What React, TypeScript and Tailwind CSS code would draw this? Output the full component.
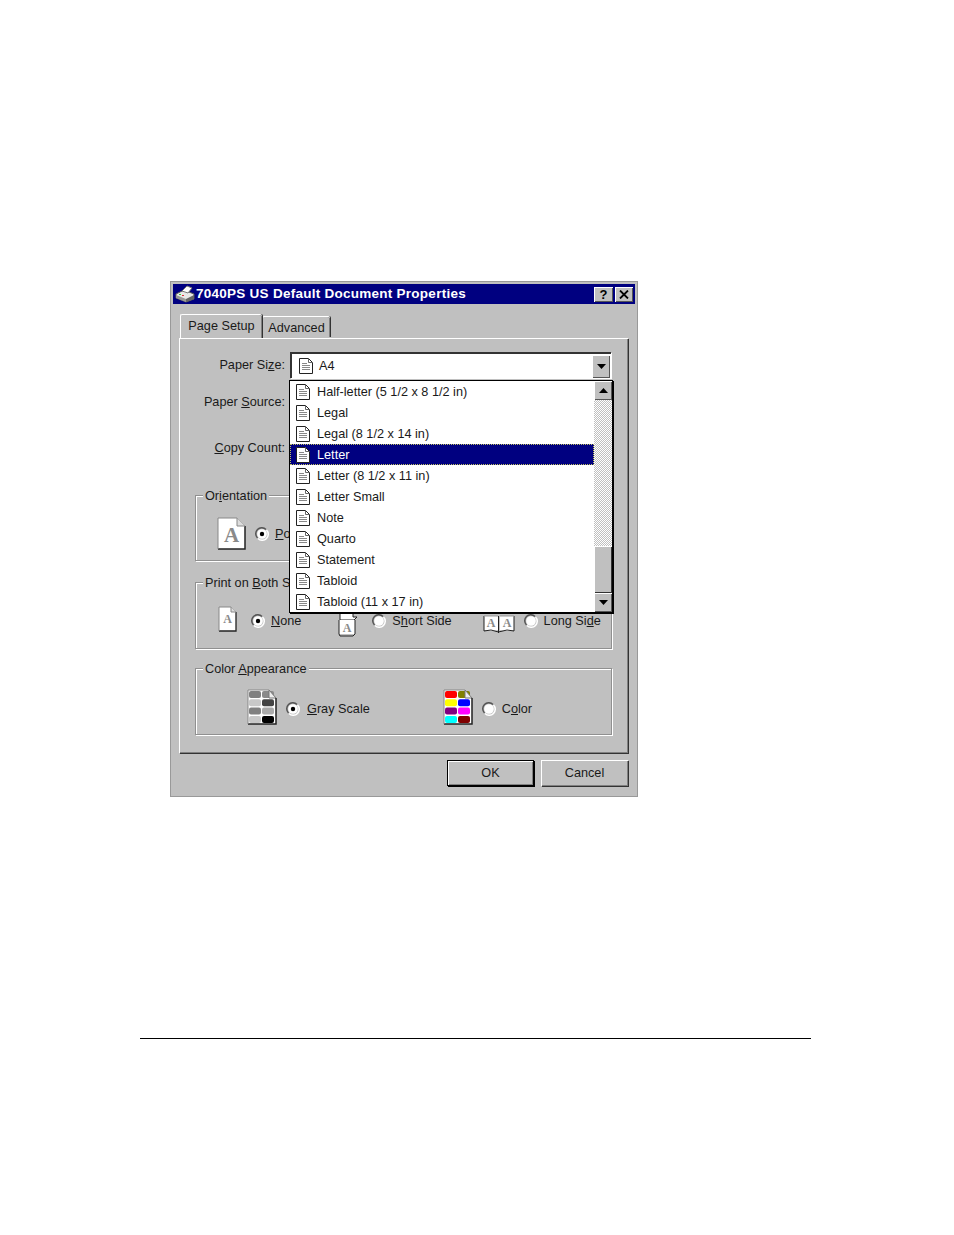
const FONT = "font-['Liberation_Sans',Arial,sans-serif]";

const PAPER_SIZES = [
  "Half-letter (5 1/2 x 8 1/2 in)",
  "Legal",
  "Legal (8 1/2 x 14 in)",
  "Letter",
  "Letter (8 1/2 x 11 in)",
  "Letter Small",
  "Note",
  "Quarto",
  "Statement",
  "Tabloid",
  "Tabloid (11 x 17 in)",
];

function DocIcon() {
  return (
    <svg width="16" height="18" viewBox="0 0 16 18" className="shrink-0">
      <path d="M1.5 1.5H10.5L14.5 5.5V16.5H1.5Z" fill="#fff" stroke="#222" />
      <path d="M10.5 1.5V5.5H14.5" fill="none" stroke="#666" />
      <path d="M4 6.5H9M4 8.5H12M4 10.5H12M4 12.5H12" stroke="#888" />
    </svg>
  );
}

function LetterPage() {
  return (
    <svg width="29" height="33" viewBox="0 0 29 33" className="shrink-0">
      <path d="M1 1H20L28 9V32H1Z" fill="#fff" />
      <path d="M28 9V32H1" fill="none" stroke="#222" strokeWidth="1.5" />
      <path d="M1 32V1H20L28 9" fill="none" stroke="#888" />
      <path d="M20 1V9H28" fill="#ddd" stroke="#888" />
      <text x="14.5" y="25" textAnchor="middle" fontFamily="'Liberation Serif',serif" fontWeight="700" fontSize="21" fill="#8a8a8a">
        A
      </text>
    </svg>
  );
}

function SmallPage() {
  return (
    <svg width="19" height="26" viewBox="0 0 19 26" className="shrink-0">
      <path d="M1 1H13L18 6V25H1Z" fill="#fff" />
      <path d="M18 6V25H1" fill="none" stroke="#222" strokeWidth="1.3" />
      <path d="M1 25V1H13L18 6" fill="none" stroke="#888" />
      <path d="M13 1V6H18" fill="#ddd" stroke="#888" />
      <text x="9.5" y="17" textAnchor="middle" fontFamily="'Liberation Serif',serif" fontWeight="700" fontSize="12" fill="#8a8a8a">
        A
      </text>
    </svg>
  );
}

function PrinterIcon() {
  return (
    <svg width="20" height="18" viewBox="0 0 20 18" className="shrink-0">
      <path d="M1 9L9 5L19 9V14L11 17L1 13Z" fill="#e8e8e8" stroke="#555" />
      <path d="M1 10L11 14V17L1 13Z" fill="#999" />
      <path d="M11 14L19 10V14L11 17Z" fill="#666" />
      <path d="M7 6L12 1L17 3L13 8Z" fill="#fff" stroke="#777" />
      <rect x="4" y="9" width="2" height="1" fill="#3c3" />
      <rect x="7" y="10" width="2" height="1" fill="#d33" />
    </svg>
  );
}

function BookIcon() {
  return (
    <svg width="32" height="20" viewBox="0 0 32 20" className="shrink-0">
      <path d="M1 1H15V15L8 16L1 15ZM17 1H31V15L24 16L17 15Z" fill="#fff" />
      <path d="M1 1V16L8 15L15.500 17L24 15L31 16V1M15.500 1V18" fill="none" stroke="#222" />
      <path d="M1 1H15M17 1H31" stroke="#999" />
      <text x="8" y="12" textAnchor="middle" fontFamily="'Liberation Serif',serif" fontWeight="700" fontSize="12" fill="#8a8a8a">
        A
      </text>
      <text x="24" y="12" textAnchor="middle" fontFamily="'Liberation Serif',serif" fontWeight="700" fontSize="12" fill="#8a8a8a">
        A
      </text>
    </svg>
  );
}

function TabletIcon() {
  return (
    <svg width="22" height="25" viewBox="0 0 22 25" className="shrink-0">
      <path d="M3 1H16V5L20 5L17 8H3Z" fill="#fff" stroke="#222" />
      <path d="M2 8H18V22H2Z" fill="#fff" />
      <path d="M18 8V22L16 24H3L2 22V8" fill="none" stroke="#222" />
      <text x="10" y="20" textAnchor="middle" fontFamily="'Liberation Serif',serif" fontWeight="700" fontSize="12" fill="#8a8a8a">
        A
      </text>
    </svg>
  );
}

function SwatchPage({ colors }: { colors: string[] }) {
  const cells = colors.map((c, i) => {
    const col = i % 2;
    const row = Math.floor(i / 2);
    return (
      <rect key={i} x={2 + col * 13} y={2 + row * 8.3} width={12} height={7} rx={2} fill={c} />
    );
  });
  return (
    <svg width="30" height="36" viewBox="0 0 30 36" className="shrink-0">
      <path d="M1 1H22L29 9V35H1Z" fill="#fff" />
      {cells}
      <path d="M22 1L29 9H22Z" fill="#eee" stroke="#777" />
      <path d="M29 9V35H1" fill="none" stroke="#222" strokeWidth="1.5" />
      <path d="M1 35V1H22" fill="none" stroke="#888" />
    </svg>
  );
}

function Radio({ checked }: { checked?: boolean }) {
  return (
    <svg width="14" height="14" viewBox="0 0 14 14" className="shrink-0">
      <path d="M11 2.500A6 6 0 0 0 2.500 11" fill="none" stroke="#555" strokeWidth="1.500" />
      <path d="M11.500 3A6 6 0 0 1 3 11.500" fill="none" stroke="#fff" strokeWidth="1.500" />
      <circle cx="7" cy="7" r="4.800" fill="#fff" />
      {checked && <circle cx="7" cy="7" r="2.200" fill="#000" />}
    </svg>
  );
}

function Btn({ children, isDefault }: { children: React.ReactNode; isDefault?: boolean }) {
  return (
    <button
      className={
        isDefault
          ? "h-[26px] w-[87px] border border-black bg-[#c0c0c0] shadow-[inset_1px_1px_0_#fff,inset_-1px_-1px_0_#808080,1px_1px_0_#000]"
          : "h-[26px] w-[87px] bg-[#c0c0c0] shadow-[inset_1px_1px_0_#fff,inset_-1px_-1px_0_#808080,1px_1px_0_#333]"
      }
    >
      {children}
    </button>
  );
}

function Group({ title, className, children }: { title: React.ReactNode; className: string; children: React.ReactNode }) {
  return (
    <fieldset
      className={
        "ml-[15px] w-[417px] border border-[#909090] shadow-[inset_1px_1px_0_#fff,1px_1px_0_#fff] " + className
      }
    >
      <legend className="ml-[7px] bg-[#c0c0c0] px-[2px] pt-[2px] leading-[15px]">{title}</legend>
      {children}
    </fieldset>
  );
}

function ScrollBtn({ down, tall }: { down?: boolean; tall?: boolean }) {
  return (
    <div
      className={
        tall
          ? "flex h-[23px] w-[18px] items-center justify-center bg-[#c0c0c0] shadow-[inset_1px_1px_0_#fff,inset_-1px_-1px_0_#555]"
          : "flex h-[19px] w-[18px] items-center justify-center bg-[#c0c0c0] shadow-[inset_1px_1px_0_#fff,inset_-1px_-1px_0_#555]"
      }
    >
      <svg width="9" height="5" viewBox="0 0 9 5">
        <path d={down ? "M0 0H9L4.500 5Z" : "M0 5H9L4.500 0Z"} fill="#000" />
      </svg>
    </div>
  );
}

export default function App() {
  return (
    <div className={`${FONT} h-[1235px] bg-white text-[12.700px] leading-[16px] text-[#1a1a1a]`}>
      <div className="h-[281px]" />
      {/* Dialog */}
      <div className="ml-[170px] flex h-[516px] w-[468px] flex-col border border-[#999] bg-[#c0c0c0] p-[2px]">
        <div className="flex h-[20px] items-center bg-[#000080] pl-[2px] pr-[2px] text-white">
          <PrinterIcon />
          <span className="ml-[1px] text-[13.500px] font-bold tracking-[0.260px]">
            7040PS US Default Document Properties
          </span>
          <div className="ml-auto flex gap-[2px]">
            <div className="flex h-[15px] w-[19px] items-center justify-center bg-[#c0c0c0] text-[13px] font-bold leading-none text-black shadow-[inset_1px_1px_0_#fff,inset_-1px_-1px_0_#555]">
              ?
            </div>
            <div className="flex h-[15px] w-[18px] items-center justify-center bg-[#c0c0c0] shadow-[inset_1px_1px_0_#fff,inset_-1px_-1px_0_#555]">
              <svg width="10" height="9" viewBox="0 0 10 9">
                <path d="M1 0.500L9 8.500M9 0.500L1 8.500" stroke="#000" strokeWidth="1.800" />
              </svg>
            </div>
          </div>
        </div>

        {/* Tabs */}
        <div className="ml-[7px] flex h-[34px] items-end">
          <div className="relative top-[1px] flex h-[25px] w-[82px] items-center justify-center rounded-t-[2px] border-l border-t border-white bg-[#c0c0c0] pb-[3px] shadow-[1px_0_0_#333,inset_-1px_0_0_#808080]">
            Page Setup
          </div>
          <div className="mb-[1px] flex h-[21px] w-[68px] items-center justify-center rounded-t-[2px] border-l border-t border-white pt-[1px] shadow-[1px_0_0_#333,inset_-1px_0_0_#808080]">
            Advanced
          </div>
        </div>

        {/* Panel */}
        <div className="relative ml-[6px] flex h-[415px] w-[449px] flex-col border-l border-t border-white shadow-[1px_1px_0_#333,inset_-1px_-1px_0_#808080]">
          <div className="mt-[13px] flex h-[26px] items-center">
            <div className="w-[105px] pb-[1px] text-right">
              Paper Si<u>z</u>e:
            </div>
            <div className="ml-[5px] flex h-[26px] w-[321px] items-center border-l-2 border-t-2 border-[#333] bg-white pl-[6px] shadow-[1px_1px_0_#fff]">
              <DocIcon />
              <span className="ml-[5px]">A4</span>
              <div className="ml-auto mr-px">
                <ScrollBtn down tall />
              </div>
            </div>
          </div>
          <div className="mt-[16px] h-[16px] w-[105px] text-right">
            Paper <u>S</u>ource:
          </div>
          <div className="mt-[30px] h-[16px] w-[105px] text-right">
            <u>C</u>opy Count:
          </div>

          <Group
            className="mt-[31px] h-[74px]"
            title={
              <>
                Or<u>i</u>entation
              </>
            }
          >
            <div className="flex items-center pl-[21px] pt-[13px]">
              <LetterPage />
              <div className="ml-[9px] flex items-center gap-[6px]">
                <Radio checked />
                <span>
                  <u>P</u>ortrait
                </span>
              </div>
            </div>
          </Group>

          <Group
            className="mt-[13px] h-[75px]"
            title={
              <>
                Print on <u>B</u>oth Sides
              </>
            }
          >
            <div className="flex h-[41px] items-center pl-[22px] pt-[15px]">
              <SmallPage />
              <div className="ml-[14px] mt-[4px] flex items-center gap-[6px]">
                <Radio checked />
                <span>
                  <u>N</u>one
                </span>
              </div>
              <div className="ml-[36px] mt-[10px]">
                <TabletIcon />
              </div>
              <div className="ml-[13px] mt-[4px] flex items-center gap-[6px]">
                <Radio />
                <span>
                  S<u>h</u>ort Side
                </span>
              </div>
              <div className="ml-[31px] mt-[12px]">
                <BookIcon />
              </div>
              <div className="ml-[9px] mt-[4px] flex items-center gap-[6px]">
                <Radio />
                <span>
                  Long Si<u>d</u>e
                </span>
              </div>
            </div>
          </Group>

          <Group
            className="mt-[11px] h-[75px]"
            title={
              <>
                Color <u>A</u>ppearance
              </>
            }
          >
            <div className="flex items-center pl-[51px] pt-[12px]">
              <SwatchPage colors={["#808080", "#8a8a8a", "#c8c8c8", "#444", "#808080", "#aaa", "#c8c8c8", "#000"]} />
              <div className="ml-[9px] mt-[4px] flex items-center gap-[7px]">
                <Radio checked />
                <span>
                  <u>G</u>ray Scale
                </span>
              </div>
              <div className="ml-[73px]">
                <SwatchPage colors={["#ff0000", "#808000", "#ffff00", "#0000ff", "#800080", "#ff00ff", "#00ffff", "#800000"]} />
              </div>
              <div className="ml-[9px] mt-[4px] flex items-center gap-[6px]">
                <Radio />
                <span>
                  C<u>o</u>lor
                </span>
              </div>
            </div>
          </Group>

          {/* Open drop-down list */}
          <div className="absolute left-[109px] top-[41px] flex h-[233px] w-[324px] border border-black bg-white shadow-[1px_1px_0_#000]">
            <div className="flex-1">
              {PAPER_SIZES.map((name) => (
                <div
                  key={name}
                  className={
                    name === "Letter"
                      ? "flex h-[21px] items-center bg-[#000080] pl-[5px] text-white outline-1 -outline-offset-1 outline-dotted outline-[#c0c060]"
                      : "flex h-[21px] items-center pl-[5px]"
                  }
                >
                  <DocIcon />
                  <span className="ml-[6px]">{name}</span>
                </div>
              ))}
            </div>
            <div className="flex w-[18px] flex-col">
              <ScrollBtn />
              <div className="h-[146px] bg-[repeating-conic-gradient(#c0c0c0_0_25%,#ffffff_0_50%)] bg-[length:2px_2px]" />
              <div className="flex-1 bg-[#c0c0c0] shadow-[inset_1px_1px_0_#fff,inset_-1px_-1px_0_#333]" />
              <ScrollBtn down />
            </div>
          </div>
        </div>

        {/* Buttons */}
        <div className="mt-[7px] flex justify-end gap-[7px] pr-[7px]">
          <Btn isDefault>OK</Btn>
          <Btn>Cancel</Btn>
        </div>
      </div>

      <div className="ml-[140px] mt-[241px] h-px w-[671px] bg-black" />
    </div>
  );
}
